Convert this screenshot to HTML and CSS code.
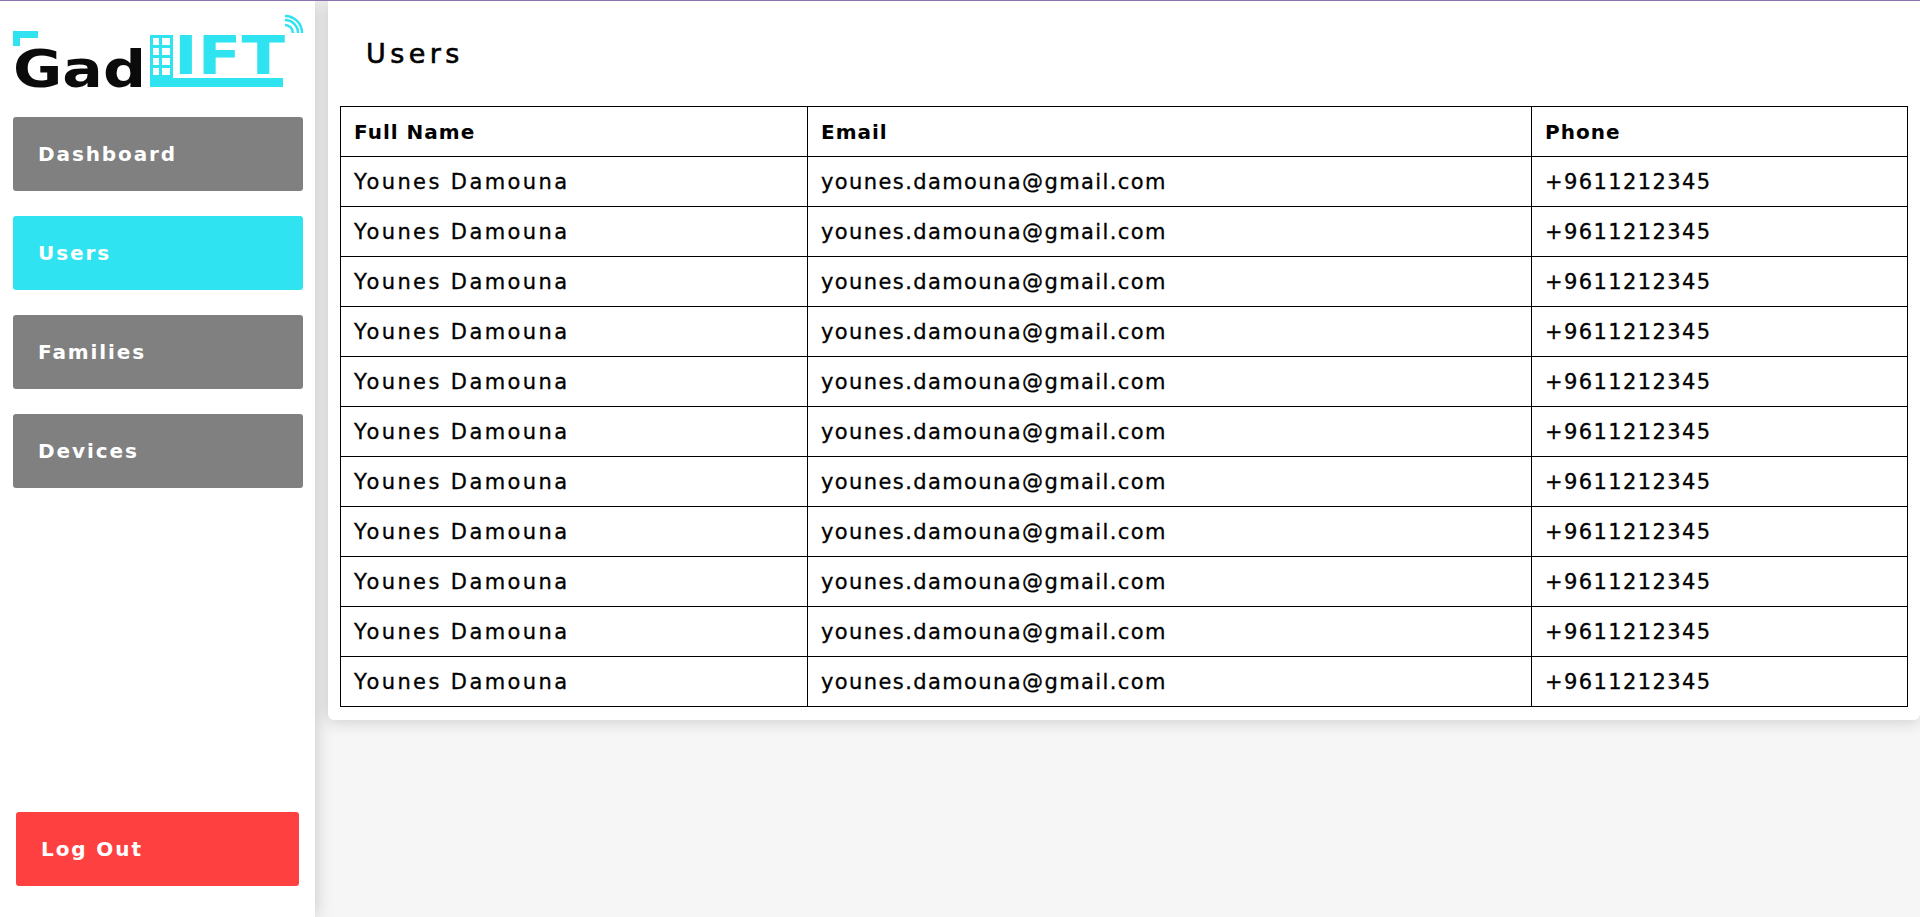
FILE: index.html
```html
<!DOCTYPE html>
<html lang="en">
<head>
	<meta charset="UTF-8">
	<title>GadLIFT - Users</title>
	<link rel="stylesheet" href="styles.css">
</head>
<body>
	<div class="page">
		<aside class="sidebar">
			<svg class="logo" width="315" height="100" viewBox="0 0 315 100" role="img" aria-label="GadLIFT">
				<path d="M13 30H38V37H20V45H13Z" fill="#2fe3f0"/>
				<text x="13" y="86" class="logo-dark" textLength="133" lengthAdjust="spacingAndGlyphs">Gad</text>
				<g fill="#2fe3f0">
					<path fill-rule="evenodd" d="M150 34H173V77H150ZM153 37V44H159V37ZM162 37V44H170V37ZM153 47V54H159V47ZM162 47V54H170V47ZM153 57V64H159V57ZM162 57V64H170V57ZM153 67V74H159V67ZM162 67V74H170V67Z"/>
					<rect x="150" y="77" width="133" height="9"/>
				</g>
				<text x="174" y="73" class="logo-cyan" textLength="111" lengthAdjust="spacingAndGlyphs">IFT</text>
				<g fill="none" stroke="#2fe3f0" stroke-width="2.5">
					<path d="M285 24A8 8 0 0 1 293 32"/>
					<path d="M285 19A13 13 0 0 1 298 32"/>
					<path d="M285 15A17 17 0 0 1 302 32"/>
				</g>
			</svg>
			<nav class="menu">
				<a class="menu-item">Dashboard</a>
				<a class="menu-item active">Users</a>
				<a class="menu-item">Families</a>
				<a class="menu-item">Devices</a>
			</nav>
			<a class="logout">Log Out</a>
		</aside>
		<main class="content">
			<section class="card">
				<h1 class="title">Users</h1>
				<table class="users">
					<thead>
						<tr>
							<th class="col-name">Full Name</th>
							<th class="col-email">Email</th>
							<th>Phone</th>
						</tr>
					</thead>
					<tbody>
						<tr><td>Younes Damouna</td><td>younes.damouna@gmail.com</td><td>+9611212345</td></tr>
						<tr><td>Younes Damouna</td><td>younes.damouna@gmail.com</td><td>+9611212345</td></tr>
						<tr><td>Younes Damouna</td><td>younes.damouna@gmail.com</td><td>+9611212345</td></tr>
						<tr><td>Younes Damouna</td><td>younes.damouna@gmail.com</td><td>+9611212345</td></tr>
						<tr><td>Younes Damouna</td><td>younes.damouna@gmail.com</td><td>+9611212345</td></tr>
						<tr><td>Younes Damouna</td><td>younes.damouna@gmail.com</td><td>+9611212345</td></tr>
						<tr><td>Younes Damouna</td><td>younes.damouna@gmail.com</td><td>+9611212345</td></tr>
						<tr><td>Younes Damouna</td><td>younes.damouna@gmail.com</td><td>+9611212345</td></tr>
						<tr><td>Younes Damouna</td><td>younes.damouna@gmail.com</td><td>+9611212345</td></tr>
						<tr><td>Younes Damouna</td><td>younes.damouna@gmail.com</td><td>+9611212345</td></tr>
						<tr><td>Younes Damouna</td><td>younes.damouna@gmail.com</td><td>+9611212345</td></tr>
					</tbody>
				</table>
			</section>
		</main>
	</div>
</body>
</html>
```
FILE: styles.css
```css
*{
	margin: 0;
	padding: 0;
	box-sizing: border-box;
}
html,body{
	height: 100%;
	overflow: hidden;
}
body{
	background-color: #f6f6f6;
	border-top: 1px solid #8e72b0;
	font-family: "DejaVu Sans", sans-serif;
	color: #000;
}
.page{
	display: flex;
	height: 100%;
}
.sidebar{
	width: 315px;
	flex-shrink: 0;
	display: flex;
	flex-direction: column;
	background-color: #fff;
	box-shadow: 0 0 18px rgba(0,0,0,0.2);
}
.logo{
	display: block;
	flex-shrink: 0;
	margin-bottom: 16px;
}
.logo-dark{
	font-family: "DejaVu Sans", sans-serif;
	font-weight: 700;
	font-size: 52px;
	fill: #0b0b0b;
}
.logo-cyan{
	font-family: "DejaVu Sans", sans-serif;
	font-weight: 700;
	font-size: 54px;
	fill: #2fe3f0;
}
.menu{
	display: flex;
	flex-direction: column;
	gap: 25px;
	padding: 0 12px 0 13px;
}
.menu-item,.logout{
	display: flex;
	align-items: center;
	height: 74px;
	border-radius: 3px;
	color: #fff;
	font-size: 20px;
	font-weight: 700;
	letter-spacing: 1.9px;
	cursor: pointer;
}
.menu-item{
	padding-left: 25px;
	background-color: #808080;
}
.menu-item.active{
	background-color: #2fe3f0;
}
.logout{
	margin: auto 16px 31px 16px;
	padding-left: 25px;
	background-color: #ff4040;
}
.content{
	flex: 1;
	min-width: 0;
	padding-left: 13px;
}
.card{
	background-color: #fff;
	border-radius: 0 0 6px 6px;
	padding: 0 12px 13px 12px;
	box-shadow: 0 0 18px rgba(0,0,0,0.2);
}
.title{
	height: 105px;
	padding: 36px 0 0 26px;
	font-size: 27px;
	line-height: 34px;
	font-weight: 400;
	letter-spacing: 4.4px;
	-webkit-text-stroke: 0.6px #000;
}
.users{
	width: 100%;
	table-layout: fixed;
	border-collapse: collapse;
}
.users th,.users td{
	height: 50px;
	padding: 0 13px;
	border: 1px solid #000;
	text-align: left;
	font-size: 21px;
	letter-spacing: 1.4px;
	white-space: nowrap;
	-webkit-text-stroke: 0.3px #000;
}
.users td:first-child{
	letter-spacing: 2.4px;
}
.users th{
	font-size: 20px;
	font-weight: 700;
	letter-spacing: 1px;
	-webkit-text-stroke: 0;
}
.col-name{
	width: 467px;
}
.col-email{
	width: 724px;
}
```
